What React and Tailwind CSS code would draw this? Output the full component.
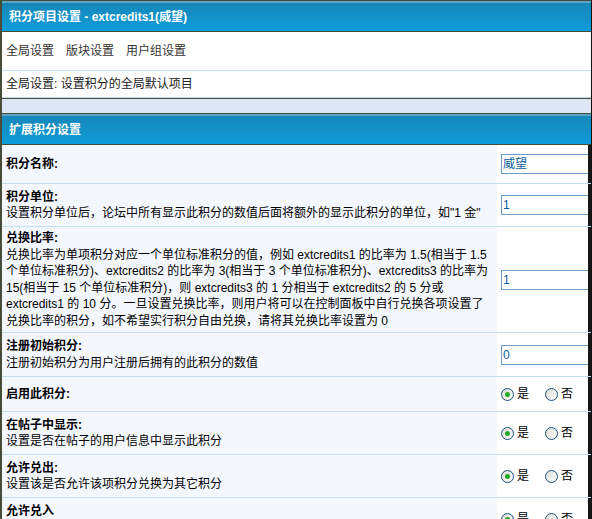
import React from "react";

const rows = [
  { title: "积分名称:", h: "h-[39px]", input: "威望" },
  {
    title: "积分单位:",
    h: "h-[43px]",
    desc: ["设置积分单位后，论坛中所有显示此积分的数值后面将额外的显示此积分的单位，如\"1 金\""],
    input: "1",
  },
  {
    title: "兑换比率:",
    h: "h-[106px]",
    desc: [
      "兑换比率为单项积分对应一个单位标准积分的值，例如 extcredits1 的比率为 1.5(相当于 1.5",
      "个单位标准积分)、extcredits2 的比率为 3(相当于 3 个单位标准积分)、extcredits3 的比率为",
      "15(相当于 15 个单位标准积分)，则 extcredits3 的 1 分相当于 extcredits2 的 5 分或",
      "extcredits1 的 10 分。一旦设置兑换比率，则用户将可以在控制面板中自行兑换各项设置了",
      "兑换比率的积分，如不希望实行积分自由兑换，请将其兑换比率设置为 0",
    ],
    input: "1",
  },
  {
    title: "注册初始积分:",
    h: "h-[44px]",
    desc: ["注册初始积分为用户注册后拥有的此积分的数值"],
    input: "0",
  },
  { title: "启用此积分:", h: "h-[35px]", radio: true },
  {
    title: "在帖子中显示:",
    h: "h-[43px]",
    desc: ["设置是否在帖子的用户信息中显示此积分"],
    radio: true,
  },
  {
    title: "允许兑出:",
    h: "h-[43px]",
    desc: ["设置该是否允许该项积分兑换为其它积分"],
    radio: true,
  },
  {
    title: "允许兑入",
    h: "h-[43px]",
    desc: ["设置该是否允许其它积分兑换为该项积分"],
    radio: true,
  },
];

function Radio({ checked, label }) {
  return (
    <span className="flex items-center gap-[3px]">
      <span className="w-[13px] h-[13px] rounded-full border border-[#1d5281] bg-linear-to-br from-[#dcdcd5] to-[#ffffff] flex items-center justify-center">
        {checked && <span className="w-[5px] h-[5px] rounded-full bg-[#21a821]" />}
      </span>
      <span>{label}</span>
    </span>
  );
}

function Header({ children }) {
  return (
    <div className="border-t border-b border-[#454d36]">
      <div className="h-[2px] bg-[#5ba5c7]" />
      <div className="h-[28px] bg-linear-to-b from-[#1687b9] to-[#0e9cda] flex items-center pl-[7px] text-white font-bold">
        {children}
      </div>
    </div>
  );
}

export default function App() {
  return (
    <div className="w-[592px] h-[519px] overflow-hidden bg-white text-[12px] text-black font-['Liberation_Sans','Noto_Sans_CJK_SC',sans-serif]">
      <div className="border-l-2 border-l-[#474d37] border-r border-r-[#111]">
        <Header>积分项目设置 - extcredits1(威望)</Header>

        <div className="h-[39px] border-b border-[#bde1f1] flex items-center gap-[12px] pl-[4px] text-[#333]">
          <span>全局设置</span>
          <span>版块设置</span>
          <span>用户组设置</span>
        </div>
        <div className="h-[27px] border-b border-[#c6dcea] flex items-center pl-[4px] text-[#222]">
          全局设置: 设置积分的全局默认项目
        </div>
        <div className="border-t border-[#454d36] h-[15px] bg-[#dde6f6]" />

        <Header>扩展积分设置</Header>

        <div className="overflow-hidden">
          {rows.map((r, i) => (
            <div key={i} className={`${r.h} flex border-b border-[#c2dff0]`}>
              <div className="w-[495px] shrink-0 bg-[#f5f7ff] flex items-center pl-[4px] pr-[2px] leading-[16.5px]">
                <div>
                  <div className="font-bold">{r.title}</div>
                  {r.desc &&
                    r.desc.map((d, j) => (
                      <div key={j} className="whitespace-nowrap">
                        {d}
                      </div>
                    ))}
                </div>
              </div>
              <div className="flex-1 bg-white flex items-center pl-[4px] overflow-hidden">
                {r.input !== undefined && (
                  <div className="h-[20px] w-[120px] shrink-0 border border-[#6d9bcc] bg-white flex items-center pl-[1px] text-[#0b5c9e]">
                    {r.input}
                  </div>
                )}
                {r.radio && (
                  <div className="flex items-center gap-[16px]">
                    <Radio checked label="是" />
                    <Radio label="否" />
                  </div>
                )}
              </div>
              <div className="w-[3px] shrink-0 bg-[#161616]" />
            </div>
          ))}
        </div>
      </div>
    </div>
  );
}
